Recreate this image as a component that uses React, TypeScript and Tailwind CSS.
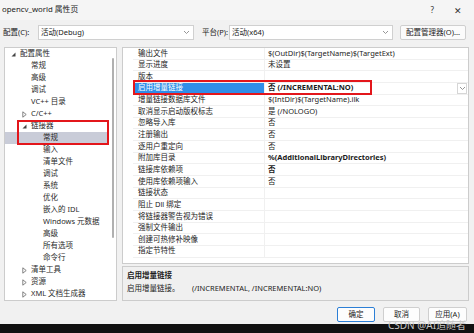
import React from 'react';

// Tree rows on the left
type Arrow = 'open' | 'closed' | null;

interface TreeItem {
  label: string;
  level: 0 | 1 | 2;
  arrow?: Arrow;
  selected?: boolean;
}

const tree: TreeItem[] = [
  { label: '配置属性', level: 0, arrow: 'open' },
  { label: '常规', level: 1 },
  { label: '高级', level: 1 },
  { label: '调试', level: 1 },
  { label: 'VC++ 目录', level: 1 },
  { label: 'C/C++', level: 1, arrow: 'closed' },
  { label: '链接器', level: 1, arrow: 'open' },
  { label: '常规', level: 2, selected: true },
  { label: '输入', level: 2 },
  { label: '清单文件', level: 2 },
  { label: '调试', level: 2 },
  { label: '系统', level: 2 },
  { label: '优化', level: 2 },
  { label: '嵌入的 IDL', level: 2 },
  { label: 'Windows 元数据', level: 2 },
  { label: '高级', level: 2 },
  { label: '所有选项', level: 2 },
  { label: '命令行', level: 2 },
  { label: '清单工具', level: 1, arrow: 'closed' },
  { label: '资源', level: 1, arrow: 'closed' },
  { label: 'XML 文档生成器', level: 1, arrow: 'closed' },
];

const indent: Record<number, string> = {
  0: 'pl-[6px]',
  1: 'pl-[17px]',
  2: 'pl-[29px]',
};

// Property grid rows
interface Prop {
  name: string;
  value?: string;
  bold?: boolean;
  selected?: boolean;
}

const props: Prop[] = [
  { name: '输出文件', value: '$(OutDir)$(TargetName)$(TargetExt)' },
  { name: '显示进度', value: '未设置' },
  { name: '版本' },
  { name: '启用增量链接', value: '否 (/INCREMENTAL:NO)', bold: true, selected: true },
  { name: '增量链接数据库文件', value: '$(IntDir)$(TargetName).ilk' },
  { name: '取消显示启动版权标志', value: '是 (/NOLOGO)' },
  { name: '忽略导入库', value: '否' },
  { name: '注册输出', value: '否' },
  { name: '逐用户重定向', value: '否' },
  { name: '附加库目录', value: '%(AdditionalLibraryDirectories)', bold: true },
  { name: '链接库依赖项', value: '否', bold: true },
  { name: '使用库依赖项输入', value: '否' },
  { name: '链接状态' },
  { name: '阻止 Dll 绑定' },
  { name: '将链接器警告视为错误' },
  { name: '强制文件输出' },
  { name: '创建可热修补映像' },
  { name: '指定节特性' },
];

function Chevron() {
  return (
    <svg width="7" height="5" viewBox="0 0 7 5" className="shrink-0">
      <path d="M1 1 L3.5 3.5 L6 1" fill="none" stroke="#8a8a8a" strokeWidth="0.9" />
    </svg>
  );
}

function TreeArrow({ kind }: { kind: Arrow }) {
  if (kind === 'open') {
    return (
      <svg width="5" height="5" viewBox="0 0 5 5">
        <path d="M4.5 0.5 L4.5 4.5 L0.5 4.5 Z" fill="#444" />
      </svg>
    );
  }
  if (kind === 'closed') {
    return (
      <svg width="5" height="7" viewBox="0 0 5 7">
        <path d="M0.8 0.8 L4.2 3.5 L0.8 6.2 Z" fill="none" stroke="#666" strokeWidth="0.8" />
      </svg>
    );
  }
  return null;
}

export default function App() {
  return (
    <div className="relative w-[474px] h-[333px] overflow-hidden flex flex-col bg-[#f1f1f1] text-[#1b1b1b] text-[7.5px] leading-none font-['Noto_Sans','Noto_Sans_CJK_SC',sans-serif]">

      {/* Title bar */}
      <div className="h-[20px] flex items-center pl-[2px] pr-[12px] bg-[#f5f5f5]">
        <span className="text-[7.8px]">opencv_world 属性页</span>
        <span className="ml-auto text-[8px] text-[#333]">?</span>
        <span className="ml-[20px] text-[9px] text-[#333]">✕</span>
      </div>

      {/* Configuration / platform toolbar */}
      <div className="mt-[5px] h-[15px] flex items-center pl-[3px] pr-[8px]">
        <span className="w-[35px]">配置(C):</span>
        <div className="w-[156px] h-full flex items-center bg-white border border-[#d0d0d0] pl-[2px] pr-[3px]">
          <span>活动(Debug)</span>
          <span className="ml-auto"><Chevron /></span>
        </div>
        <span className="ml-[8px] w-[27px]">平台(P):</span>
        <div className="w-[164px] h-full flex items-center bg-white border border-[#d0d0d0] pl-[2px] pr-[3px]">
          <span>活动(x64)</span>
          <span className="ml-auto"><Chevron /></span>
        </div>
        <div className="ml-auto w-[66px] h-full flex items-center justify-center bg-[#fbfbfb] border border-[#cfcfcf] rounded-[2px]">
          配置管理器(O)...
        </div>
      </div>

      {/* Panels */}
      <div className="mt-[7px] h-[254px] flex pl-[4px] pr-[5px] gap-[5px]">

        {/* Tree */}
        <div className="relative w-[113px] h-full flex bg-white border border-[#cccccc]">
          <div className="flex-1 flex flex-col">
            {tree.map((item, i) => (
              <div
                key={i}
                className={`h-[12.05px] flex items-center ${indent[item.level]} ${item.selected ? 'bg-[#c9ccd8]' : ''}`}
              >
                <span className="w-[9px] flex items-center">
                  <TreeArrow kind={item.arrow ?? null} />
                </span>
                <span className="text-[#2a2a2a]">{item.label}</span>
              </div>
            ))}
          </div>
          <div className="w-[7px] flex justify-center">
            <div className="mt-[10px] w-[2px] h-[180px] bg-[#b0b0b0] rounded-full" />
          </div>

          {/* red mark over 链接器 / 常规 */}
          <div className="absolute left-[12px] top-[72px] w-[92px] h-[25px] border-2 border-[#e3161b]" />
        </div>

        {/* Property grid + description */}
        <div className="flex-1 flex flex-col gap-[2px]">
          <div className="relative h-[217px] flex flex-col bg-white border border-[#cccccc]">
            {props.map((p, i) => (
              <div key={i} className="h-[11.65px] flex">
                <div className="w-[10px]" />
                <div
                  className={`w-[132px] flex items-center pl-[5px] border-b border-r border-[#f0f0f0] ${p.selected ? 'bg-[#2f8ee8] text-white' : ''}`}
                >
                  {p.name}
                </div>
                <div className={`flex-1 flex items-center pl-[3px] border-b border-[#f0f0f0] ${p.bold ? 'font-bold' : ''}`}>
                  <span>{p.value}</span>
                  {p.selected && (
                    <span className="ml-auto mr-[1px] w-[10px] h-[11px] flex items-center justify-center border border-[#d6d6d6] bg-white">
                      <Chevron />
                    </span>
                  )}
                </div>
              </div>
            ))}

            {/* red mark over the selected property */}
            <div className="absolute left-[10px] top-[32px] w-[239px] h-[15px] border-2 border-[#e3161b]" />
          </div>

          <div className="flex-1 flex flex-col gap-[5px] px-[4px] pt-[5px] bg-[#f0f0f0] border border-[#cccccc]">
            <span className="font-bold">启用增量链接</span>
            <div className="flex">
              <span className="w-[65px]">启用增量链接。</span>
              <span>(/INCREMENTAL, /INCREMENTAL:NO)</span>
            </div>
          </div>
        </div>
      </div>

      {/* Buttons */}
      <div className="mt-[6px] h-[15px] flex justify-end gap-[8px] pr-[7px]">
        <button className="w-[38px] h-full flex items-center justify-center bg-[#fdfdfd] border border-[#2c7fd6] rounded-[2px]">确定</button>
        <button className="w-[37px] h-full flex items-center justify-center bg-[#fdfdfd] border border-[#cfcfcf] rounded-[2px]">取消</button>
        <button className="w-[39px] h-full flex items-center justify-center bg-[#fdfdfd] border border-[#cfcfcf] rounded-[2px]">应用(A)</button>
      </div>

      <div className="mt-auto h-[9px] bg-[#111111]" />

      {/* watermark */}
      <span className="absolute left-[388px] top-[320px] text-[10px] leading-none text-[#c8c8c8]">CSDN @AI追随者</span>
    </div>
  );
}
